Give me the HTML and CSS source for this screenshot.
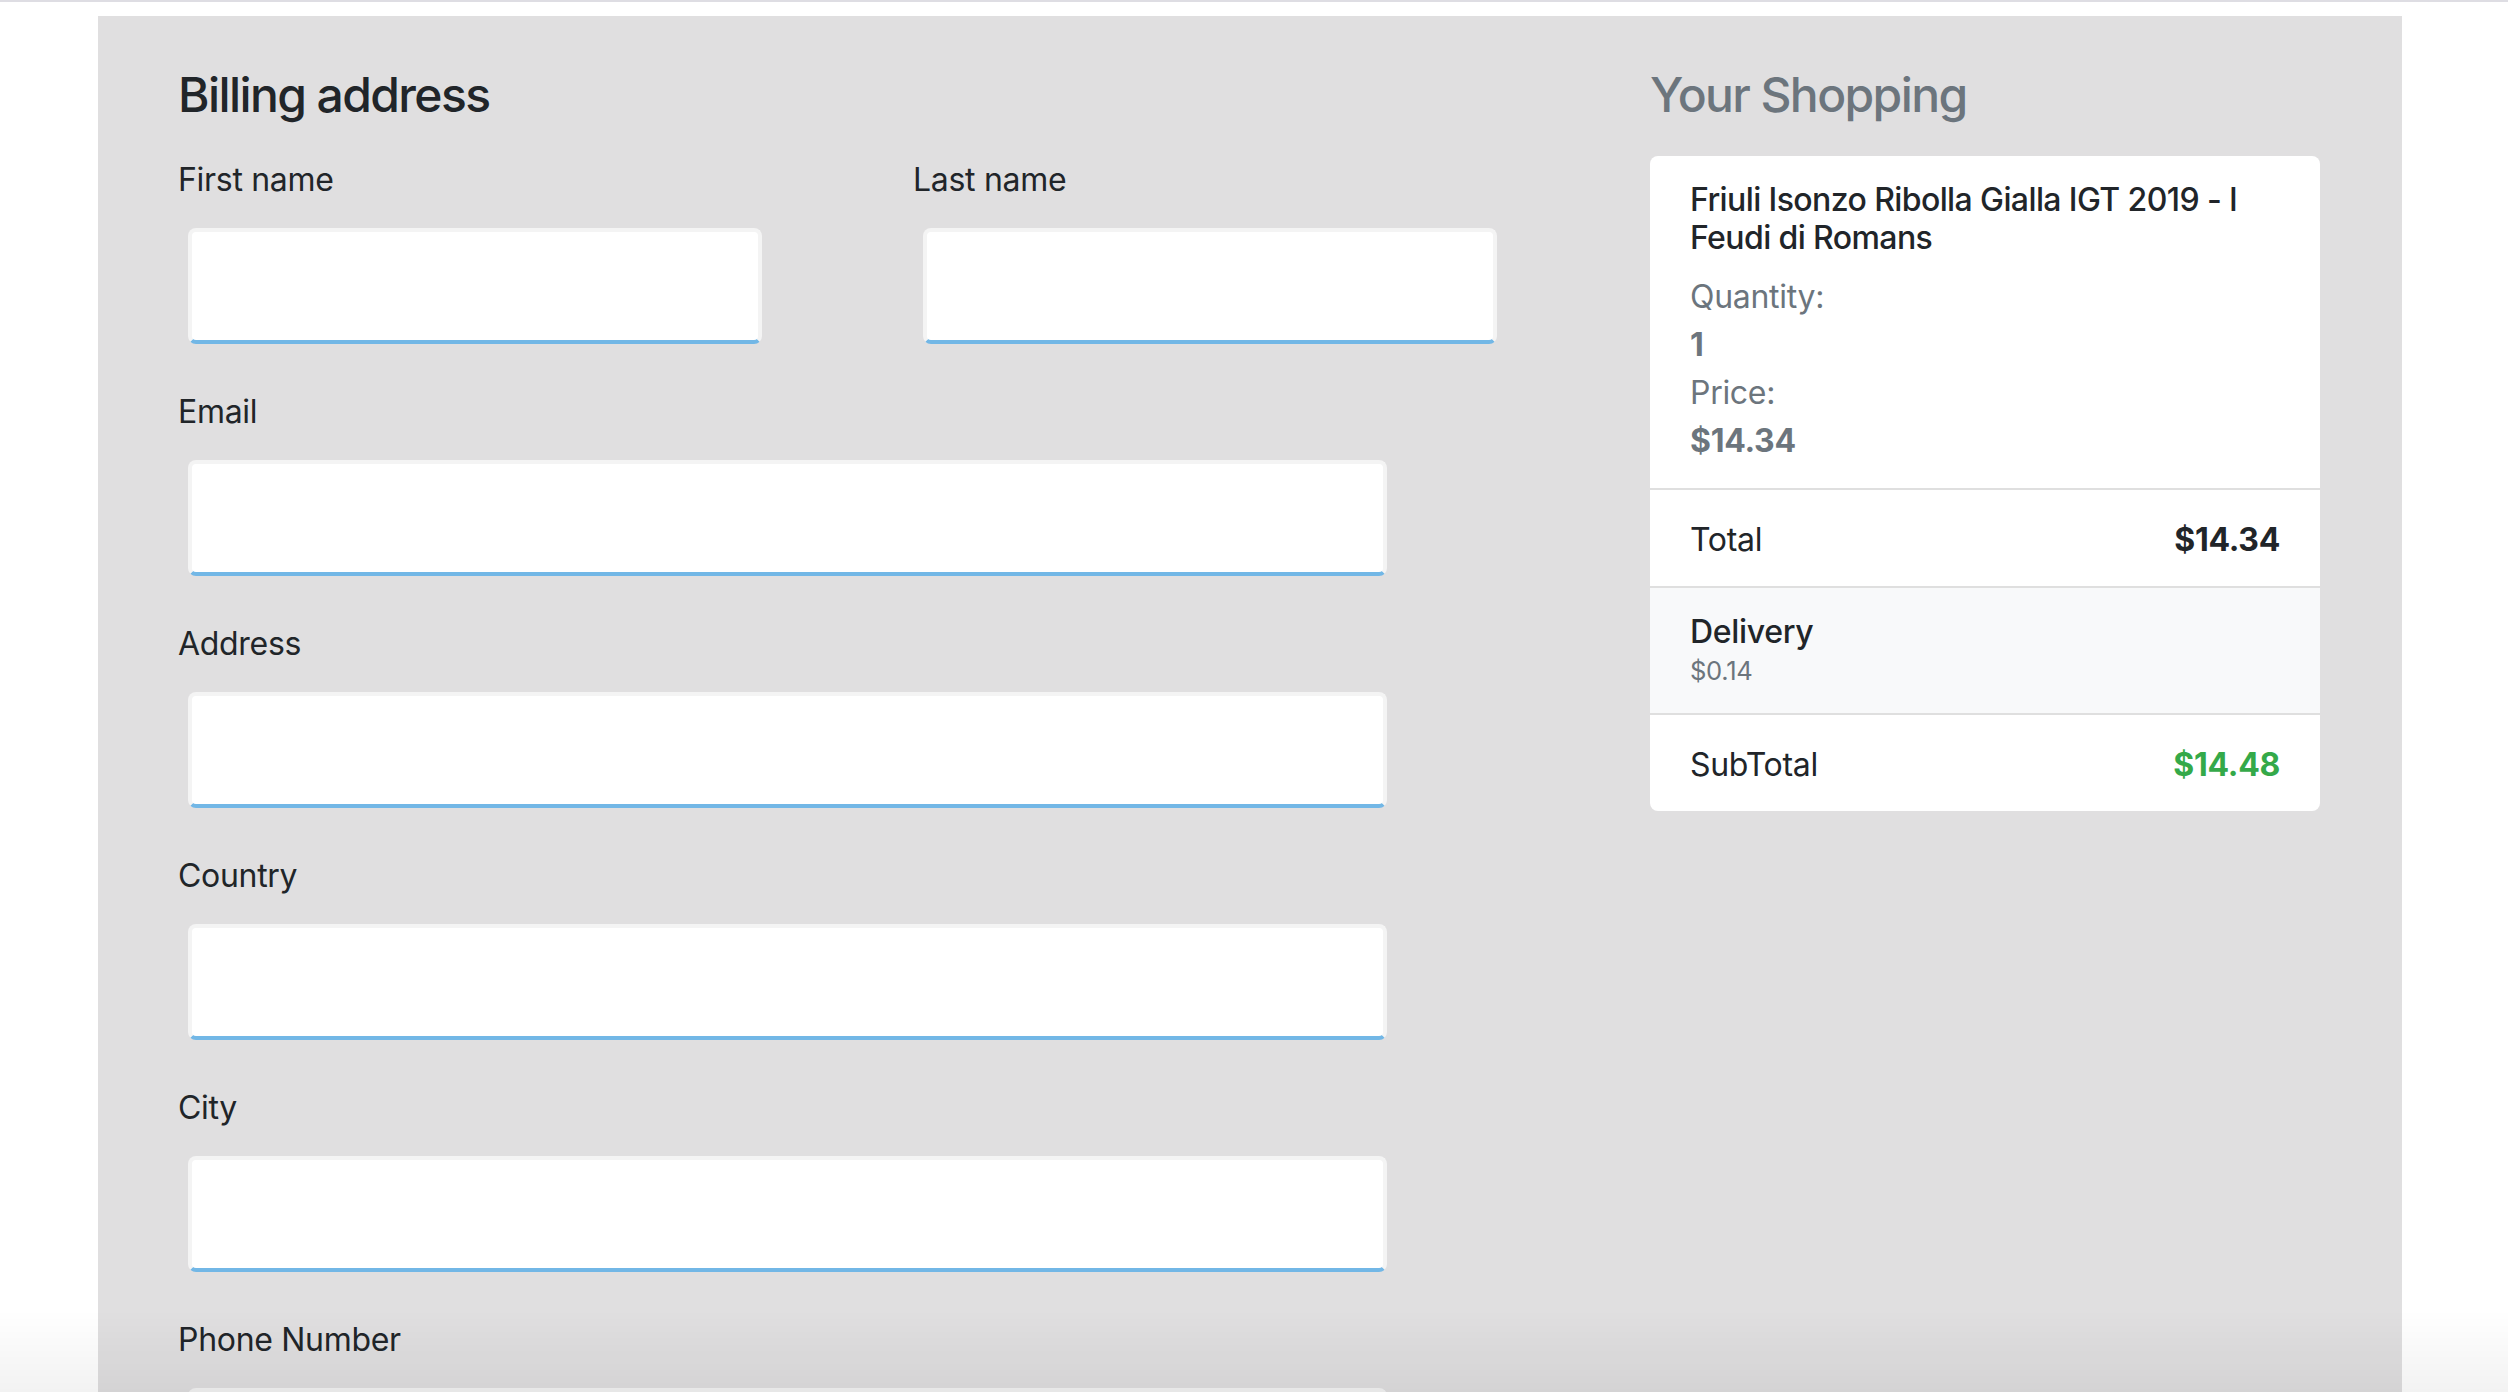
FILE: index.html
```html
<!DOCTYPE html>
<html lang="en">
<head>
<meta charset="utf-8">
<title>Checkout</title>
<link rel="stylesheet" href="styles.css">
</head>
<body>
<div class="topline"></div>
<div class="container">
  <div class="layout">
    <div class="main-col">
      <h4 class="section-title">Billing address</h4>
      <form class="billing-form">
        <div class="two-cols">
          <div class="field">
            <label class="field-label" for="firstName">First name</label>
            <input class="field-input" id="firstName" type="text">
          </div>
          <div class="field">
            <label class="field-label" for="lastName">Last name</label>
            <input class="field-input" id="lastName" type="text">
          </div>
        </div>
        <div class="field">
          <label class="field-label" for="email">Email</label>
          <input class="field-input" id="email" type="email">
        </div>
        <div class="field">
          <label class="field-label" for="address">Address</label>
          <input class="field-input" id="address" type="text">
        </div>
        <div class="field">
          <label class="field-label" for="country">Country</label>
          <input class="field-input" id="country" type="text">
        </div>
        <div class="field">
          <label class="field-label" for="city">City</label>
          <input class="field-input" id="city" type="text">
        </div>
        <div class="field">
          <label class="field-label" for="phone">Phone Number</label>
          <input class="field-input" id="phone" type="tel">
        </div>
      </form>
    </div>
    <div class="side-col">
      <h4 class="section-title side-title">Your Shopping</h4>
      <ul class="cart">
        <li class="cart-item cart-product">
          <h6 class="product-name">Friuli Isonzo Ribolla Gialla IGT 2019 - I Feudi di Romans</h6>
          <div class="muted">Quantity:</div>
          <div class="muted strong">1</div>
          <div class="muted">Price:</div>
          <div class="muted strong">$14.34</div>
        </li>
        <li class="cart-item cart-row">
          <span>Total</span>
          <strong>$14.34</strong>
        </li>
        <li class="cart-item cart-light">
          <h6 class="delivery-title">Delivery</h6>
          <small class="muted delivery-price">$0.14</small>
        </li>
        <li class="cart-item cart-row">
          <span>SubTotal</span>
          <strong class="success">$14.48</strong>
        </li>
      </ul>
    </div>
  </div>
</div>
<div class="bottom-fade"></div>
</body>
</html>
```

FILE: styles.css
```css
* {
  box-sizing: border-box;
}

html, body {
  margin: 0;
  padding: 0;
  background: #ffffff;
}

body {
  font-family: Inter, "Noto Sans", "Liberation Sans", sans-serif;
  font-size: 32px;
  line-height: 48px;
  color: #212529;
  overflow: hidden;
  height: 1392px;
}

.topline {
  height: 2px;
  background: #dedde3;
}

.container {
  margin: 14px 0 0 98px;
  width: 2304px;
  background: #e0dfe0;
  padding: 50px 80px 200px 80px;
}

.layout {
  display: grid;
  grid-template-columns: 1410px 670px;
  column-gap: 62px;
  align-items: start;
}

.section-title {
  margin: 0 0 30px 0;
  font-size: 48px;
  line-height: 57.6px;
  font-weight: 500;
  letter-spacing: -1.6px;
  color: #212529;
}

.side-title {
  color: #6c757d;
  margin-bottom: 32px;
}

.billing-form {
  margin: 0;
}

.two-cols {
  display: grid;
  grid-template-columns: 1fr 1fr;
  column-gap: 60px;
}

.field {
  display: flex;
  flex-direction: column;
  align-items: flex-start;
  margin-bottom: 32px;
}

.field-label {
  display: block;
  font-size: 32px;
  line-height: 48px;
  padding-top: 2px;
  margin-bottom: 14px;
  letter-spacing: -0.3px;
}

.field-input {
  display: block;
  width: 85%;
  height: 116px;
  margin: 10px 0 10px 10px;
  background: #ffffff;
  border: 4px solid #f4f4f4;
  border-bottom-color: #72b7e6;
  border-radius: 8px;
  padding: 0 24px;
  font: inherit;
  outline: none;
}

.cart {
  list-style: none;
  margin: 0;
  padding: 0;
  background: #ffffff;
  border-radius: 8px;
  overflow: hidden;
}

.cart-item {
  padding: 24px 40px;
  border-top: 2px solid #dfdfdf;
  letter-spacing: -0.3px;
}

.cart-item:first-child {
  border-top: none;
}

.cart-product {
  padding: 25px 40px 23px;
}

.product-name {
  margin: 0 0 16px 0;
  font-size: 32px;
  line-height: 38.4px;
  font-weight: 500;
  letter-spacing: -0.6px;
  color: #212529;
}

.muted {
  color: #6c757d;
}

.strong {
  font-weight: 700;
}

.cart-row {
  display: flex;
  justify-content: space-between;
  align-items: center;
  padding: 26px 40px 22px;
}

.cart-row strong {
  font-weight: 700;
}

.cart-light {
  background: #f8f9fa;
  padding: 25px 40px 23px;
}

.delivery-title {
  margin: 0;
  font-size: 32px;
  line-height: 38.4px;
  font-weight: 500;
}

.delivery-price {
  display: block;
  font-size: 25.6px;
  line-height: 38.4px;
}

.success {
  color: #34a949;
}

.bottom-fade {
  position: fixed;
  left: 0;
  right: 0;
  bottom: 0;
  height: 82px;
  pointer-events: none;
  background: linear-gradient(to bottom, rgba(0, 0, 0, 0), rgba(0, 0, 0, 0.05));
}
```
